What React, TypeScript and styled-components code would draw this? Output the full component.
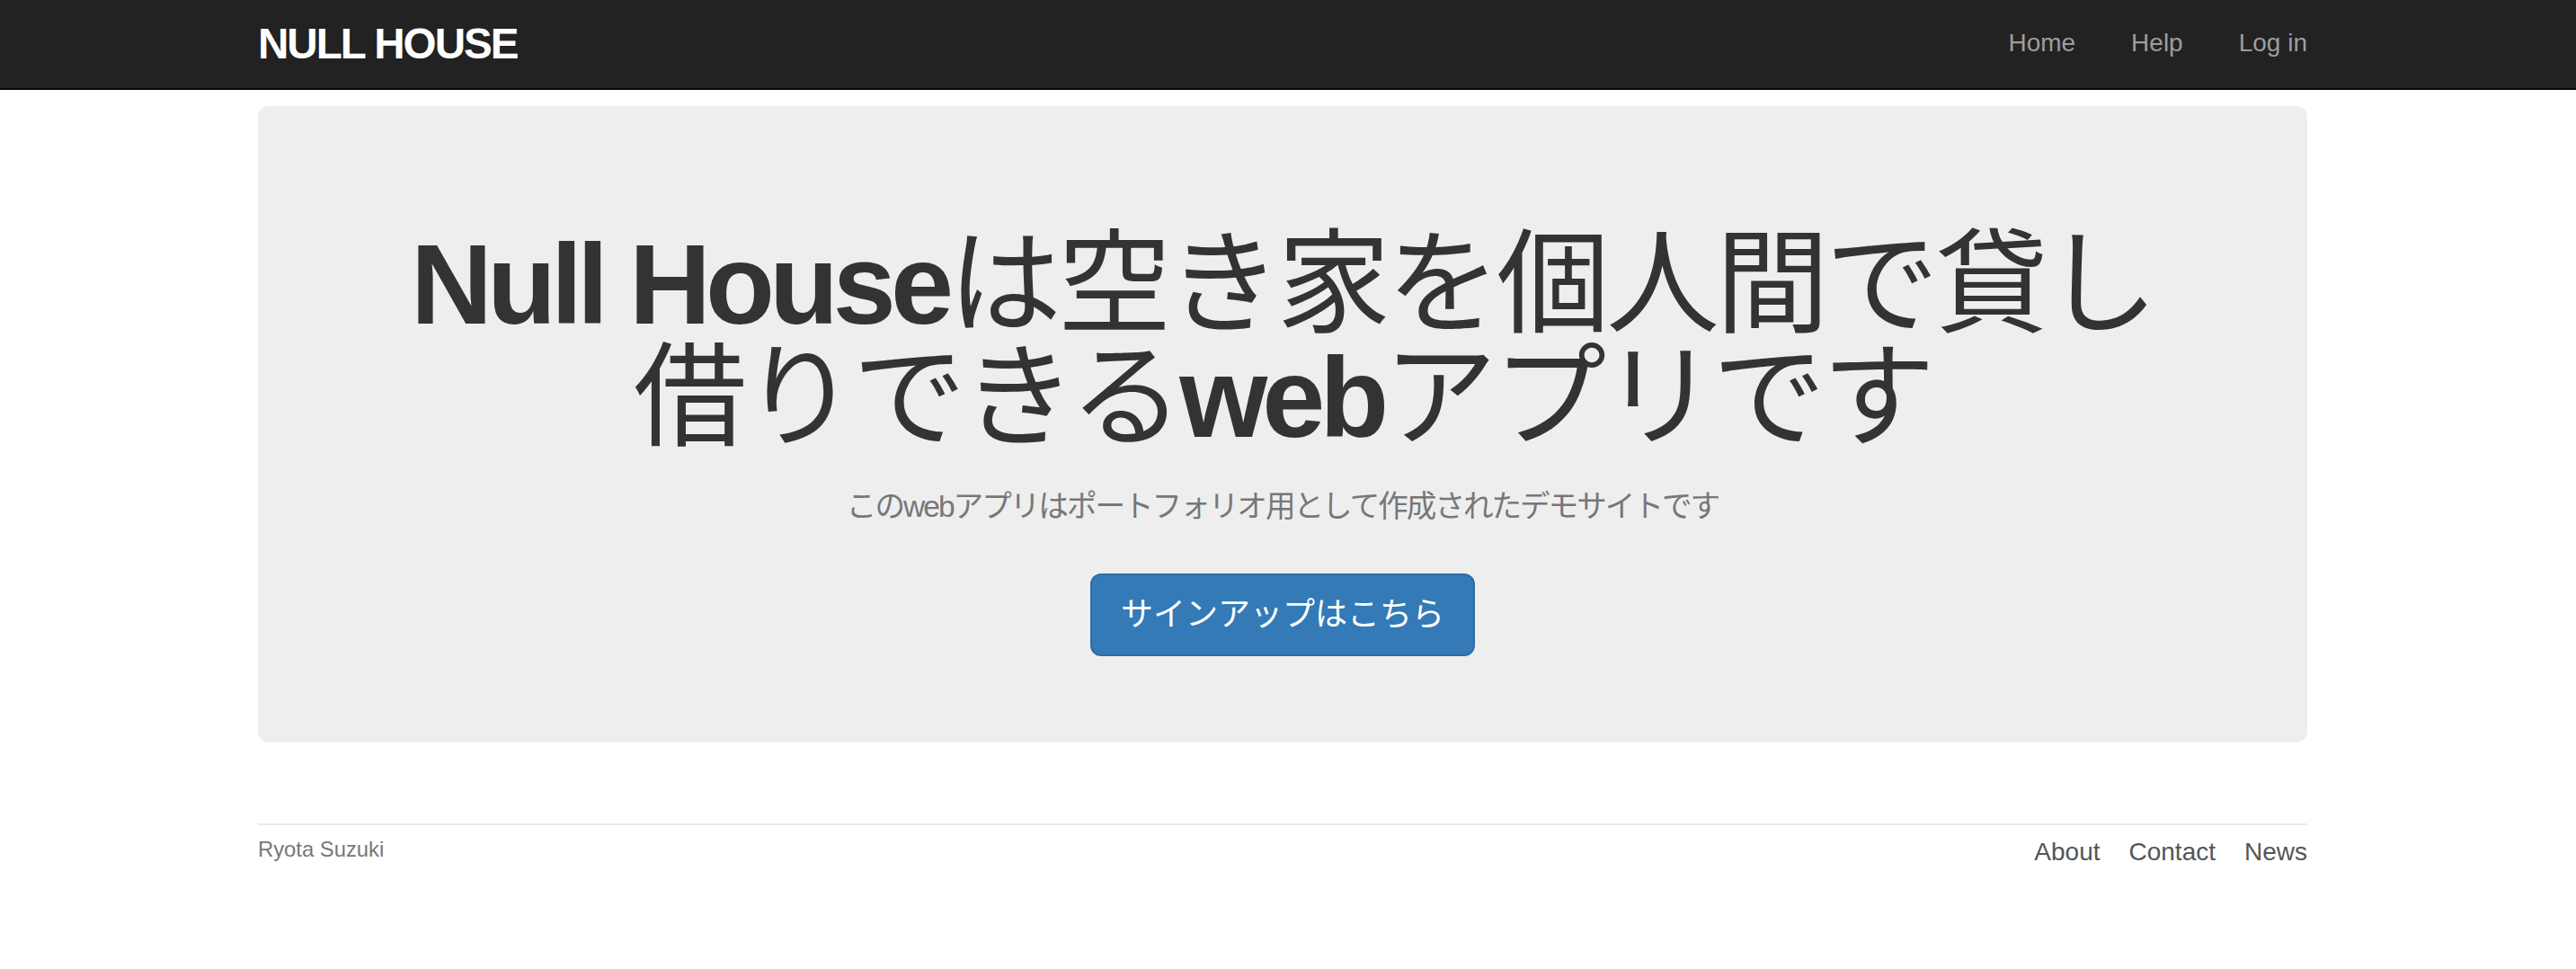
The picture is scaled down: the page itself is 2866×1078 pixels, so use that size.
import React from "react";
import styled, {createGlobalStyle} from "styled-components";

const GlobalStyle = createGlobalStyle`
  * {
    box-sizing: border-box;
  }
  body {
    margin: 0;
    background-color: #fff;
    color: #333;
    font-family: "Liberation Sans", Arial, "Noto Sans CJK JP", sans-serif;
    font-size: 28px;
    line-height: 40px;
  }
  a {
    text-decoration: none;
  }
`;

const navLinks = ["Home", "Help", "Log in"];
const footerLinks = ["About", "Contact", "News"];

function App() {
  return (
    <>
      <GlobalStyle />
      <Navbar>
        <Container>
          <Logo href="#">NULL HOUSE</Logo>
          <NavList>
            {navLinks.map((label) => (
              <li key={label}>
                <NavLink href="#">{label}</NavLink>
              </li>
            ))}
          </NavList>
        </Container>
      </Navbar>
      <Container>
        <Jumbotron>
          <Title>
            <Latin>Null House</Latin>は空き家を個人間で貸し借りできる<Latin>web</Latin>アプリです
          </Title>
          <Subtitle>このwebアプリはポートフォリオ用として作成されたデモサイトです</Subtitle>
          <SignupButton href="#">サインアップはこちら</SignupButton>
        </Jumbotron>
        <Footer>
          <Credit>Ryota Suzuki</Credit>
          <FooterList>
            {footerLinks.map((label) => (
              <li key={label}>
                <FooterLink href="#">{label}</FooterLink>
              </li>
            ))}
          </FooterList>
        </Footer>
      </Container>
    </>
  );
}

const Navbar = styled.nav`
  height: 100px;
  background-color: #222;
  border-bottom: 2px solid #080808;
`;
const Container = styled.div`
  display: flex;
  flex-direction: column;
  width: 2280px;
  margin-left: calc(50% - 1146px);
  ${Navbar} & {
    flex-direction: row;
    justify-content: space-between;
    align-items: flex-start;
  }
`;
const Logo = styled.a`
  padding-top: 15px;
  color: #fff;
  font-size: 47.6px;
  line-height: 68px;
  font-weight: bold;
  letter-spacing: -2px;
`;
const NavList = styled.ul`
  display: flex;
  list-style: none;
  margin: 0 -31px 0 0;
  padding: 0;
`;
const NavLink = styled.a`
  display: block;
  padding: 28px 31px 30px;
  color: #9d9d9d;
  font-size: 28px;
  line-height: 40px;
`;
const Jumbotron = styled.section`
  margin-top: 18px;
  padding: 96px 120px;
  background-color: #eee;
  border-radius: 12px;
  text-align: center;
`;
const Title = styled.h1`
  margin: 40px 0 20px;
  font-size: 126px;
  line-height: 126px;
  font-weight: normal;
  letter-spacing: -4px;
  color: #333;
`;
const Latin = styled.span`
  font-weight: bold;
  letter-spacing: -6px;
`;
const Subtitle = styled.h2`
  margin: 39px 0 56px;
  font-size: 33.6px;
  line-height: 37px;
  font-weight: normal;
  letter-spacing: -2px;
  color: #777;
`;
const SignupButton = styled.a`
  align-self: center;
  display: inline-block;
  margin: 0 auto;
  padding: 20px 32px;
  font-size: 36px;
  line-height: 48px;
  color: #fff;
  background-color: #337ab7;
  border: 2px solid #2e6da4;
  border-radius: 12px;
`;
const Footer = styled.footer`
  display: flex;
  justify-content: space-between;
  align-items: flex-start;
  margin-top: 90px;
  padding-top: 10px;
  border-top: 2px solid #eaeaea;
  color: #777;
`;
const Credit = styled.small`
  font-size: 23.8px;
  line-height: 34px;
`;
const FooterList = styled.ul`
  display: flex;
  gap: 32px;
  list-style: none;
  margin: 0;
  padding: 0;
`;
const FooterLink = styled.a`
  color: #555;
`;

export default App;
